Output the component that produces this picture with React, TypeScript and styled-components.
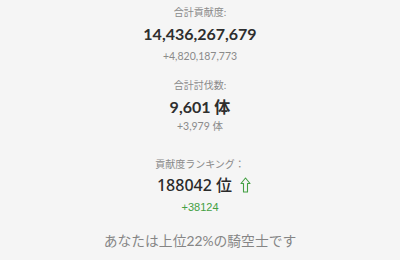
import React from 'react';
import styled, { createGlobalStyle } from 'styled-components';

const Global = createGlobalStyle`
    html, body {
        margin: 0;
        padding: 0;
        background: #f5f5f5;
    }
    body {
        font-family: Lato, "Noto Sans CJK JP", sans-serif;
    }
`;

const Page = styled.div`
    width: 400px;
    height: 260px;
    display: flex;
    flex-direction: column;
    align-items: center;
    padding-top: 5px;
    box-sizing: border-box;
    background: #f5f5f5;
    overflow: hidden;
`;

const Block = styled.div<{ $gap?: number }>`
    display: flex;
    flex-direction: column;
    align-items: center;
    margin-bottom: ${({ $gap }) => $gap ?? 13}px;
`;

const Label = styled.div`
    font-size: 10px;
    color: #8a8a8a;
    line-height: 14px;
`;

const Value = styled.div`
    font-size: 16px;
    font-weight: 700;
    color: #2e2e2e;
    line-height: 22px;
    margin-top: 4px;
`;

const Rank = styled.div`
    font-family: "Noto Sans", "Noto Sans CJK JP", sans-serif;
    font-size: 16px;
    font-weight: 500;
    color: #2a2a2a;
    line-height: 22px;
    margin-top: 3px;
    display: flex;
    align-items: center;
    gap: 8px;
    padding-left: 8px;
`;

const Diff = styled.div<{ $shift?: number }>`
    font-size: 10.5px;
    color: #8a8a8a;
    line-height: 16px;
    margin-top: ${({ $shift }) => $shift ?? 3}px;
`;

const UpDiff = styled(Diff)`
    font-family: "Liberation Sans", sans-serif;
    font-size: 11px;
    color: #43a043;
    margin-top: 3px;
`;

const Summary = styled.div`
    font-size: 13.8px;
    color: #858585;
    margin-top: 2px;
`;

const UpArrow: React.FC = () => (
    <svg width="11" height="16" viewBox="0 0 11 16">
        <path
            d="M5.5 1 L10 6.5 L7.5 6.5 L7.5 15 L3.5 15 L3.5 6.5 L1 6.5 Z"
            fill="none"
            stroke="#43a043"
            strokeWidth="1.1"
            strokeLinejoin="round"
        />
    </svg>
);

const stats = [
    { label: '合計貢献度:', value: '14,436,267,679', diff: '+4,820,187,773', shift: 3, gap: 14 },
    { label: '合計討伐数:', value: '9,601 体', diff: '+3,979 体', shift: 0, gap: 23 },
];

const App: React.FC = () => {
    return (
        <>
            <Global />
            <Page>
                {stats.map((s) => (
                    <Block key={s.label} $gap={s.gap}>
                        <Label>{s.label}</Label>
                        <Value>{s.value}</Value>
                        <Diff $shift={s.shift}>{s.diff}</Diff>
                    </Block>
                ))}
                <Block>
                    <Label>貢献度ランキング：</Label>
                    <Rank>
                        188042 位 <UpArrow />
                    </Rank>
                    <UpDiff>+38124</UpDiff>
                </Block>
                <Summary>あなたは上位22%の騎空士です</Summary>
            </Page>
        </>
    );
};

export default App;
